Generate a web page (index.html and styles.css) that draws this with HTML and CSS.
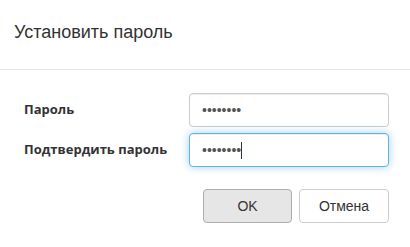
FILE: index.html
```html
<!DOCTYPE html>
<html lang="ru">

<head>
  <meta charset="utf-8" />
  <title>Установить пароль</title>
  <link rel="stylesheet" href="styles.css">
</head>

<body>
  <div class="modal">
    <!-- =================== ЗАГОЛОВОК =================== -->
    <div class="modal-header">
      <h4 class="modal-title">Установить пароль</h4>
    </div>

    <!-- =================== ФОРМА =================== -->
    <form class="modal-body">
      <div class="form-row">
        <label for="pass">Пароль</label>
        <input id="pass" class="form-control" type="password" value="12345678">
      </div>
      <div class="form-row">
        <label for="pass2">Подтвердить пароль</label>
        <div class="field">
          <input id="pass2" class="form-control focus" type="password" value="12345678">
          <span class="caret"></span>
        </div>
      </div>
    </form>

    <!-- =================== КНОПКИ =================== -->
    <div class="modal-footer">
      <button class="btn active" type="button">OK</button>
      <button class="btn" type="button">Отмена</button>
    </div>
  </div>
</body>

</html>
```

FILE: styles.css
```css
/* ===== RESET & BODY ===== */
* {
  box-sizing: border-box;
  margin: 0;
  padding: 0
}

body {
  font-family: "Liberation Sans", Arial, sans-serif;
  background: #fff;
  color: #333;
  width: 410px
}

/* ===== ЗАГОЛОВОК ===== */
.modal-header {
  height: 70px;
  padding: 22px 14px 0;
  border-bottom: 1px solid #e5e5e5
}

.modal-title {
  font-size: 18px;
  font-weight: normal;
  line-height: 20px;
  color: #333
}

/* ===== ФОРМА ===== */
.modal-body {
  display: flex;
  flex-direction: column;
  gap: 6px;
  padding: 23px 21px 0 24px
}

.form-row {
  display: grid;
  grid-template-columns: 1fr 200px;
  align-items: center
}

.form-row label {
  font-family: "Open Sans", sans-serif;
  font-weight: 700;
  font-size: 13px;
  color: #333;
  padding-bottom: 3px
}

.field {
  position: relative
}

.form-control {
  display: block;
  width: 200px;
  height: 34px;
  padding: 6px 12px;
  font-family: "Liberation Sans", Arial, sans-serif;
  font-size: 14px;
  color: #555;
  background: #fff;
  border: 1px solid #ccc;
  border-radius: 4px;
  box-shadow: inset 0 1px 1px rgba(0, 0, 0, .075);
  outline: none
}

.form-control.focus {
  border-color: #66afe9;
  box-shadow: inset 0 1px 1px rgba(0, 0, 0, .075), 0 0 8px rgba(102, 175, 233, .6)
}

.caret {
  position: absolute;
  left: 52px;
  top: 9px;
  width: 1px;
  height: 17px;
  background: #333
}

/* ===== КНОПКИ ===== */
.modal-footer {
  display: flex;
  justify-content: flex-end;
  gap: 7px;
  padding: 22px 21px 0 0
}

.btn {
  height: 34px;
  padding: 6px 12px;
  font-family: "Liberation Sans", Arial, sans-serif;
  font-size: 14px;
  color: #333;
  background: #fff;
  border: 1px solid #ccc;
  border-radius: 4px;
  cursor: pointer
}

.btn:first-child {
  width: 89px
}

.btn:last-child {
  width: 90px
}

.btn.active {
  background: #e6e6e6;
  border-color: #adadad
}
```
